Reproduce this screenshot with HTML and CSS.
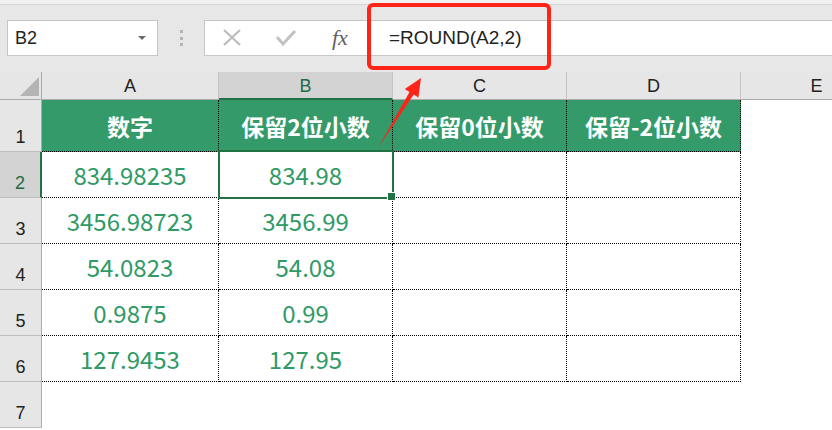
FILE: index.html
```html
<!doctype html>
<html>
<head>
    <meta charset="utf-8">
    <title>ROUND函数</title>
    <link rel="stylesheet" href="styles.css">
</head>
<body>
<div class="app">
    <div class="topline"></div>
    <div class="toolbar">
        <div class="namebox">
            <span class="ref">B2</span>
            <span class="drop"></span>
        </div>
        <div class="grip"><i></i><i></i><i></i></div>
        <div class="formula">
            <div class="btns">
                <svg class="ic" width="20" height="18" viewBox="0 0 20 18">
                    <path d="M2 1 L18 16 M18 1 L2 16" stroke="#bcbcbc" stroke-width="2.2" fill="none"/>
                </svg>
                <svg class="ic" width="22" height="18" viewBox="0 0 22 18">
                    <path d="M2 8 L8 15 L20 2" stroke="#c2c2c2" stroke-width="3" fill="none"/>
                </svg>
                <span class="fx">fx</span>
            </div>
            <div class="ftext">=ROUND(A2,2)</div>
        </div>
    </div>

    <div class="sheet">
        <div class="corner"><span class="tri"></span></div>
        <div class="colh">A</div>
        <div class="colh sel">B</div>
        <div class="colh">C</div>
        <div class="colh">D</div>
        <div class="colh last">E</div>

        <div class="rowh">1</div>
        <div class="cell head">数字</div>
        <div class="cell head">保留2位小数</div>
        <div class="cell head">保留0位小数</div>
        <div class="cell head">保留-2位小数</div>
        <div class="blank"></div>

        <div class="rowh sel">2</div>
        <div class="cell">834.98235</div>
        <div class="cell active">834.98</div>
        <div class="cell"></div>
        <div class="cell"></div>
        <div class="blank"></div>

        <div class="rowh">3</div>
        <div class="cell">3456.98723</div>
        <div class="cell">3456.99</div>
        <div class="cell"></div>
        <div class="cell"></div>
        <div class="blank"></div>

        <div class="rowh">4</div>
        <div class="cell">54.0823</div>
        <div class="cell">54.08</div>
        <div class="cell"></div>
        <div class="cell"></div>
        <div class="blank"></div>

        <div class="rowh">5</div>
        <div class="cell">0.9875</div>
        <div class="cell">0.99</div>
        <div class="cell"></div>
        <div class="cell"></div>
        <div class="blank"></div>

        <div class="rowh">6</div>
        <div class="cell">127.9453</div>
        <div class="cell">127.95</div>
        <div class="cell"></div>
        <div class="cell"></div>
        <div class="blank"></div>

        <div class="rowh">7</div>
        <div class="blank"></div>
        <div class="blank"></div>
        <div class="blank"></div>
        <div class="blank"></div>
        <div class="blank"></div>
    </div>

    <!-- 标注 -->
    <div class="mark"></div>
    <svg class="arrow" width="832" height="430" viewBox="0 0 832 430">
        <polygon points="378,148 409.5,92 404.8,89.1 421,78 418.4,97.5 413.7,94.6" fill="#ff2418"/>
    </svg>
</div>
</body>
</html>
```

FILE: styles.css
```css
*{
    margin:0;
    padding:0;
    box-sizing:border-box;
}
body{
    width:832px;
    height:430px;
    overflow:hidden;
    background:#fff;
    font-family:"Liberation Sans","Noto Sans CJK SC",sans-serif;
}
.app{
    position:relative;
    width:832px;
    height:430px;
}
.topline{
    height:5px;
    background:#f1f1f1;
    border-bottom:1px solid #d4d4d4;
}
.toolbar{
    height:67px;
    background:#e7e7e7;
    display:flex;
    align-items:flex-start;
    padding-top:15px;
}
.namebox{
    width:151px;
    height:36px;
    margin-left:7px;
    background:#fff;
    border:1px solid #c6c6c6;
    display:flex;
    align-items:center;
    justify-content:space-between;
    padding:0 11px 0 7px;
}
.ref{
    font-size:18px;
    color:#222;
}
.drop{
    width:0;
    height:0;
    border-left:4px solid transparent;
    border-right:4px solid transparent;
    border-top:4px solid #6a6a6a;
}
.grip{
    width:46px;
    height:36px;
    display:flex;
    flex-direction:column;
    align-items:center;
    justify-content:center;
    gap:3.5px;
}
.grip i{
    display:block;
    width:3px;
    height:3px;
    background:#b5b5b5;
}
.formula{
    flex:1;
    height:36px;
    background:#fff;
    border:1px solid #c6c6c6;
    border-right:none;
    display:flex;
    align-items:center;
}
.btns{
    width:163px;
    height:100%;
    display:flex;
    align-items:center;
    padding-left:17px;
    gap:33px;
}
.ic{
    display:block;
}
.fx{
    font-family:"Liberation Serif",serif;
    font-style:italic;
    font-size:22px;
    color:#5f5f5f;
    margin-left:2px;
}
.ftext{
    padding-left:21px;
    font-size:19px;
    color:#222;
}

.sheet{
    display:grid;
    grid-template-columns:42px 177px 174px 174px 174px 1fr;
    grid-template-rows:28px 52px repeat(6,46px);
}
.corner{
    background:#e6e6e6;
    border-right:1px solid #ababab;
    border-bottom:1px solid #ababab;
    position:relative;
}
.tri{
    position:absolute;
    right:2px;
    bottom:3px;
    width:0;
    height:0;
    border-left:19px solid transparent;
    border-bottom:19px solid #b4b4b4;
}
.colh{
    background:#e6e6e6;
    border-right:1px solid #c4c4c4;
    border-bottom:1px solid #ababab;
    font-size:18px;
    color:#222;
    display:flex;
    align-items:center;
    justify-content:center;
    padding-top:2px;
}
.colh.last{
    border-right:none;
    padding-left:60px;
}
.colh.sel{
    background:#d3d3d3;
    color:#1e6b45;
    border-bottom:2px solid #217346;
}
.rowh{
    background:#e6e6e6;
    border-right:1px solid #ababab;
    border-bottom:1px solid #bdbdbd;
    font-size:18px;
    color:#222;
    display:flex;
    align-items:flex-end;
    justify-content:center;
    padding-bottom:3px;
}
.rowh.sel{
    background:#d3d3d3;
    color:#1e6b45;
    border-right:2px solid #217346;
}
.cell{
    border-right:1px dotted #000;
    border-bottom:1px dotted #000;
    display:flex;
    align-items:center;
    justify-content:center;
    font-family:"Noto Sans CJK SC","Liberation Sans",sans-serif;
    font-size:24px;
    color:#2f9a66;
}
.cell.head{
    background:#349a69;
    color:#fff;
    font-weight:bold;
    font-size:23px;
}
.cell.active{
    position:relative;
}
.cell.active::before{
    content:"";
    position:absolute;
    left:-1px;
    top:-2px;
    right:-2px;
    bottom:-2px;
    border:2px solid #217346;
}
.cell.active::after{
    content:"";
    position:absolute;
    right:-4px;
    bottom:-4px;
    width:7px;
    height:7px;
    background:#217346;
    border:1px solid #fff;
}
.blank{
    background:#fff;
}

.mark{
    position:absolute;
    left:367px;
    top:3px;
    width:184px;
    height:67px;
    border:4px solid #ff2418;
    border-radius:6px;
}
.arrow{
    position:absolute;
    left:0;
    top:0;
}
```
